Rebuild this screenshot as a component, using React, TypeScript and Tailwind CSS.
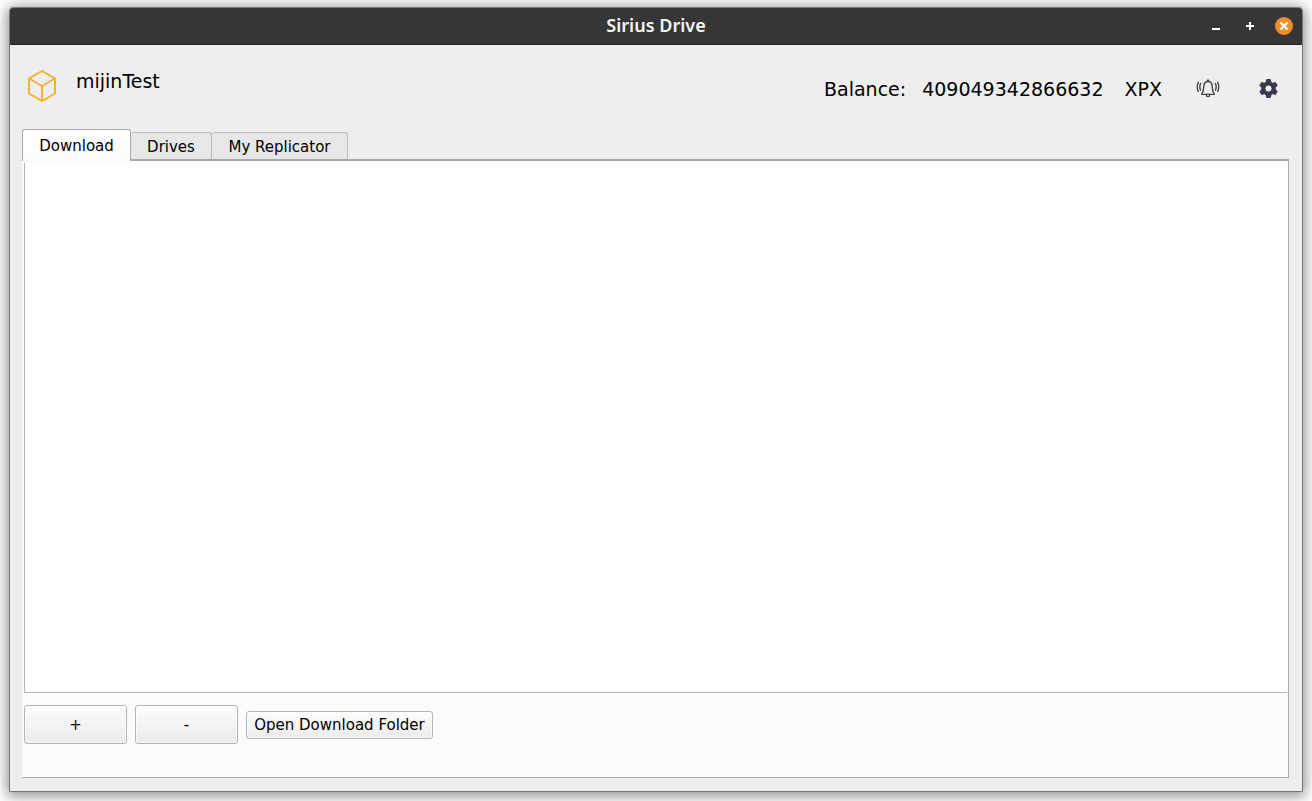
import { useState } from 'react';

const tabs = [
  { name: 'Download', width: 'w-[109px]' },
  { name: 'Drives', width: 'w-[81px]' },
  { name: 'My Replicator', width: 'w-[136px]' },
];

function CubeIcon() {
  return (
    <svg className="h-8 w-7" viewBox="0 0 28 32" fill="none" stroke="#f5b02e" strokeWidth="2" strokeLinejoin="round" aria-hidden="true">
      <path d="M14 1 27 8.5V23.5L14 31 1 23.5V8.5Z" />
      <path d="M1 8.5 14 16 27 8.5M14 16V31" />
    </svg>
  );
}

function BellIcon() {
  return (
    <svg className="h-5 w-6" viewBox="0 0 24 20" fill="none" stroke="#444" strokeWidth="1.4" strokeLinecap="round" strokeLinejoin="round" aria-hidden="true">
      <path d="M12 2.500C8.800 2.500 7.700 4.800 7.700 8C7.700 11.800 6.900 13.200 5.700 15.400H18.300C17.100 13.200 16.300 11.800 16.300 8C16.300 4.800 15.200 2.500 12 2.500Z" />
      <path d="M11.300 2.500V1.900A.7.7 0 0 1 12.700 1.900V2.500M10.200 15.700C10.300 18.200 13.700 18.200 13.800 15.700" />
      <path d="M4.600 4.500Q3 7.800 4.600 11.200M2.300 3.300Q.2 7.800 2.300 12.400M19.400 4.500Q21 7.800 19.400 11.200M21.700 3.300Q23.800 7.800 21.700 12.400" />
    </svg>
  );
}

function GearIcon() {
  return (
    <svg className="size-6" viewBox="0 0 24 24" fill="#39394f" stroke="#39394f" strokeLinejoin="round" aria-hidden="true">
      <path fillRule="evenodd" strokeWidth="1" d="M10.700 2.500H14.300L14.900 5.200 16.800 6.300 19.400 5.500 21.200 8.600 19.200 10.400V12.600L21.200 14.400 19.400 17.500 16.800 16.700 14.900 17.800 14.300 20.500H10.700L10.100 17.800 8.200 16.700 5.600 17.500 3.800 14.400 5.800 12.600V10.400L3.800 8.600 5.600 5.500 8.200 6.300 10.100 5.200ZM12.500 7.900A3.600 3.600 0 1 0 12.500 15.100A3.600 3.600 0 1 0 12.500 7.900Z" />
    </svg>
  );
}

function TitleBar() {
  return (
    <header className="grid h-[37px] shrink-0 grid-cols-[1fr_auto_1fr] items-center rounded-t-[3px] border-b border-[#222] bg-[#363636] text-white">
      <h1 className="col-start-2 pb-0.5 font-['Noto_Sans','Open_Sans',sans-serif] text-[18px] leading-6 font-semibold text-[#f5f5f5]">Sirius Drive</h1>
      <div className="flex items-center justify-self-end gap-4 pr-[9px]">
        <button type="button" aria-label="Minimize" className="size-[18px]">
          <svg viewBox="0 0 18 18" aria-hidden="true"><path d="M5 12H13" stroke="#fff" strokeWidth="2" /></svg>
        </button>
        <button type="button" aria-label="Maximize" className="size-[18px]">
          <svg viewBox="0 0 18 18" aria-hidden="true"><path d="M5 9H13M9 5V13" stroke="#fff" strokeWidth="2" /></svg>
        </button>
        <button type="button" aria-label="Close" className="size-[18px] rounded-full bg-[#f28d2b]">
          <svg viewBox="0 0 18 18" aria-hidden="true"><path d="M5.500 5.500 12.500 12.500M12.500 5.500 5.500 12.500" stroke="#fff" strokeWidth="2.400" /></svg>
        </button>
      </div>
    </header>
  );
}

const buttonStyle = 'rounded-[3px] border border-[#b4b4b4] bg-linear-to-b from-[#fdfdfd] to-[#ebebeb] inset-ring inset-ring-white/60';

export default function App() {
  const [active, setActive] = useState('Download');
  return (
    <div className="h-screen bg-white px-[9px] pt-[7px] pb-[9px] font-['DejaVu_Sans',sans-serif] text-black">
      <div className="flex h-full flex-col rounded-t-[4px] border border-[#777] bg-[#eee] shadow-[0_2px_14px_2px_rgba(0,0,0,0.45)]">
        <TitleBar />
        <div className="flex items-start justify-between pt-6 pr-[22px] pl-[18px] text-[19px] leading-6">
          <div className="flex items-start gap-5">
            <div className="pt-px"><CubeIcon /></div>
            <span>mijinTest</span>
          </div>
          <div className="flex items-center pt-2">
            <span>Balance:</span>
            <span className="ml-4">409049342866632</span>
            <span className="ml-[21px]">XPX</span>
            <button type="button" aria-label="Notifications" className="ml-[34px]"><BellIcon /></button>
            <button type="button" aria-label="Settings" className="ml-9"><GearIcon /></button>
          </div>
        </div>
        <main className="mx-3 mt-[27px] mb-[13px] flex min-h-0 flex-1 flex-col pr-px">
          <div role="tablist" className="z-10 -mb-[2px] flex h-8 shrink-0 items-end text-[15px] leading-5">
            {tabs.map(({ name, width }) => (
              <button
                key={name}
                type="button"
                role="tab"
                aria-selected={name === active}
                onClick={() => setActive(name)}
                className={`${width} ${
                  name === active
                    ? 'h-8 rounded-t-[3px] border border-b-0 border-[#aaa] bg-linear-to-b from-white to-[#fbfbfb]'
                    : 'mb-[2px] h-[27px] rounded-t-[3px] border border-b-0 border-l-0 border-[#bbb] bg-[#e7e7e7] pt-px'
                }`}
              >
                {name}
              </button>
            ))}
          </div>
          <section className="flex min-h-0 flex-1 flex-col border-t-2 border-r border-b border-[#aaa] bg-[#fbfbfb] pt-[2px] pl-[2px]">
            <div className="mr-px min-h-0 flex-1 border-b border-l border-[#b4b4b4] bg-white" />
            <div className="flex items-center gap-2 pt-3 pb-[33px] text-[15px] leading-5">
              <button type="button" className={`h-[39px] w-[103px] ${buttonStyle}`}>+</button>
              <button type="button" className={`h-[39px] w-[103px] ${buttonStyle}`}>-</button>
              <button type="button" className={`h-7 w-[187px] ${buttonStyle}`}>Open Download Folder</button>
            </div>
          </section>
        </main>
      </div>
    </div>
  );
}
